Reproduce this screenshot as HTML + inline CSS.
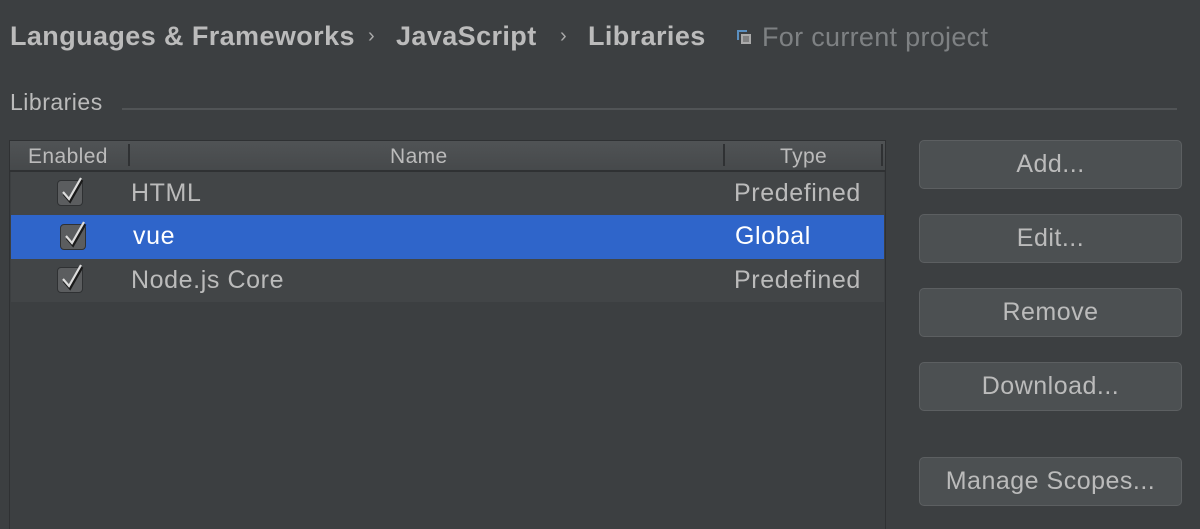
<!DOCTYPE html>
<html><head><style>
body{margin:0;width:1200px;height:529px;background:#3c3f41;font-family:"Liberation Sans",sans-serif;position:relative;overflow:hidden;color:#bbbbbb}
.a{position:absolute;white-space:nowrap}
.h{font-weight:bold;font-size:27px;letter-spacing:0.4px;top:21px;color:#bbbbbb}
.sep{font-size:20px;top:25px;color:#aaa}
.btn{position:absolute;left:919px;width:263px;height:49px;background:#4c5052;border:1px solid #5c5f61;border-radius:5px;box-sizing:border-box;text-align:center;line-height:47px;font-size:25px;letter-spacing:0.5px;color:#bbbbbb}
.row{position:absolute;left:11px;width:873px;height:43px;background:#424547;font-size:25px;letter-spacing:0.6px;line-height:43px}
.cb{position:absolute;left:46px;top:8px;width:26px;height:26px;background:#5b5d5f;border:1px solid #2f3133;border-radius:4px;box-sizing:border-box}
.cb svg{position:absolute;left:1px;top:-7px}
</style></head><body>
<div class="a h" style="left:10px">Languages &amp; Frameworks</div>
<div class="a sep" style="left:368px">›</div>
<div class="a h" style="left:396px">JavaScript</div>
<div class="a sep" style="left:560px">›</div>
<div class="a h" style="left:588px">Libraries</div>
<svg class="a" style="left:736px;top:29px" width="17" height="17"><rect x="1" y="1" width="10" height="10" fill="#5a8fc0"/><rect x="3" y="3" width="9" height="9" fill="#3c3f41"/><rect x="5" y="5" width="10" height="10" fill="#aaa"/><path d="M7 8h6M7 10h6M7 12h6" stroke="#555" stroke-width="1"/></svg>
<div class="a" style="left:762px;top:22px;font-size:27px;letter-spacing:0.3px;color:#7e8183">For current project</div>
<div class="a" style="left:10px;top:89px;font-size:23px;letter-spacing:0.5px">Libraries</div>
<div class="a" style="left:122px;top:108px;width:1055px;height:2px;background:#515456"></div>
<div class="a" style="left:9px;top:140px;width:877px;height:389px;border:1px solid #2f3133;border-bottom:none;box-sizing:border-box;background:#3c3f41"></div>
<div class="a" style="left:10px;top:141px;width:875px;height:29px;background:linear-gradient(#505355,#46494b);border-bottom:2px solid #2f3133;font-size:21px;line-height:31px;letter-spacing:0.4px">
<span class="a" style="left:18px">Enabled</span><span class="a" style="left:118px;top:3px;width:2px;height:22px;background:#2f3133"></span>
<span class="a" style="left:380px">Name</span><span class="a" style="left:713px;top:3px;width:2px;height:22px;background:#2f3133"></span>
<span class="a" style="left:770px">Type</span><span class="a" style="left:871px;top:3px;width:2px;height:22px;background:#2f3133"></span></div>
<div class="row" style="top:172px"><div class="cb"><svg width="28" height="32"><path d="M5 20l6 7L23 6" stroke="#1a1a1a" stroke-width="3" fill="none"/><path d="M4 18l6 7L22 4" stroke="#ddd" stroke-width="2.2" fill="none"/></svg></div><span class="a" style="left:120px">HTML</span><span class="a" style="left:723px">Predefined</span></div>
<div class="row" style="top:215px;height:44px;background:#2f65ca;color:#fff"><div class="cb" style="left:49px;top:9px"><svg width="28" height="32"><path d="M5 20l6 7L23 6" stroke="#1a1a1a" stroke-width="3" fill="none"/><path d="M4 18l6 7L22 4" stroke="#ddd" stroke-width="2.2" fill="none"/></svg></div><span class="a" style="left:122px">vue</span><span class="a" style="left:724px">Global</span></div>
<div class="row" style="top:259px"><div class="cb"><svg width="28" height="32"><path d="M5 20l6 7L23 6" stroke="#1a1a1a" stroke-width="3" fill="none"/><path d="M4 18l6 7L22 4" stroke="#ddd" stroke-width="2.2" fill="none"/></svg></div><span class="a" style="left:120px">Node.js Core</span><span class="a" style="left:723px">Predefined</span></div>
<div class="btn" style="top:140px">Add...</div>
<div class="btn" style="top:214px">Edit...</div>
<div class="btn" style="top:288px">Remove</div>
<div class="btn" style="top:362px">Download...</div>
<div class="btn" style="top:457px">Manage Scopes...</div>
</body></html>
